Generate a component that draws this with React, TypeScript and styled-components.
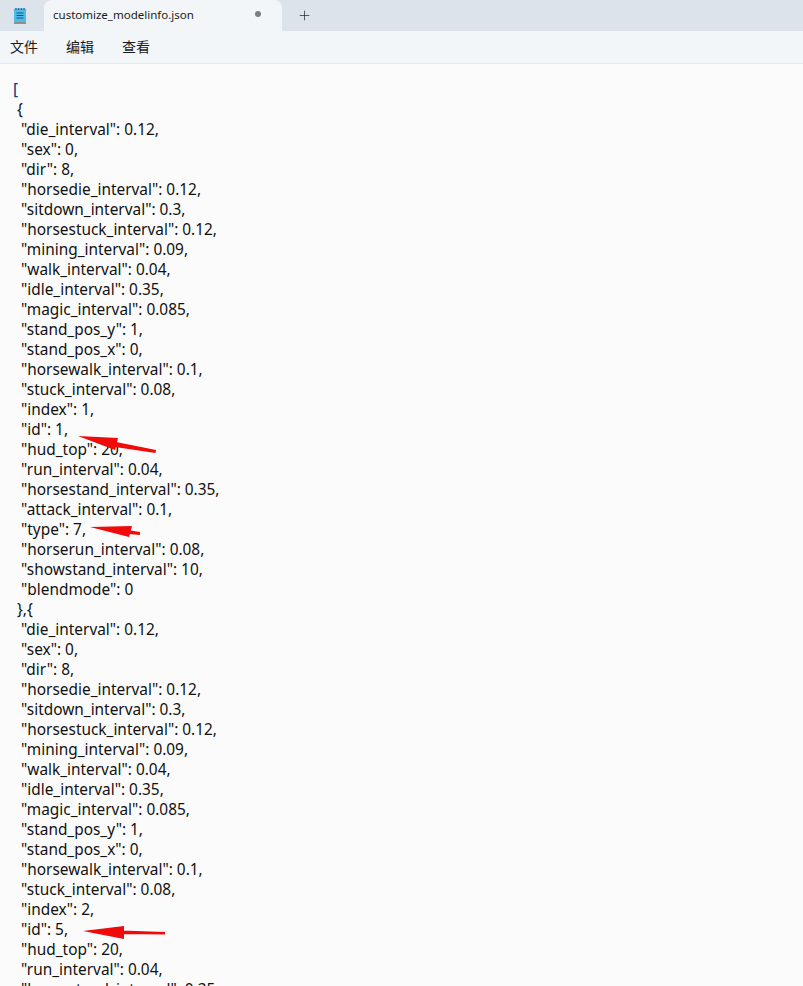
import styled, { createGlobalStyle } from "styled-components";
import { Plus } from "lucide-react";

const GlobalStyle = createGlobalStyle`
  html, body {
    margin: 0;
    padding: 0;
    height: 100%;
    overflow: hidden;
    background: #fbfbfb;
  }
`;

const Window = styled.div`
  position: relative;
  display: flex;
  flex-direction: column;
  height: 986px;
  overflow: hidden;
  background: #fbfbfb;
  color: #1a1a1a;
  font-family: "Noto Sans", "Noto Sans CJK SC", sans-serif;
`;

const TabBar = styled.div`
  display: flex;
  align-items: flex-end;
  height: 31px;
  background: #dde3ea;
  flex-shrink: 0;
`;

const AppIcon = styled.div`
  display: flex;
  align-items: center;
  justify-content: center;
  width: 44px;
  height: 31px;
  padding-right: 5px;
  box-sizing: border-box;
`;

const Tab = styled.div`
  display: flex;
  align-items: center;
  width: 238px;
  height: 31px;
  padding: 0 14px 0 9px;
  box-sizing: border-box;
  background: #f3f6f9;
  border-radius: 8px 8px 0 0;
  font-size: 11.5px;
`;

const TabTitle = styled.span`
  flex: 1;
  padding-bottom: 2px;
`;

const UnsavedDot = styled.span`
  width: 6px;
  height: 6px;
  margin: 0 7px 3px 0;
  border-radius: 50%;
  background: #7b7f84;
`;

const NewTab = styled.div`
  display: flex;
  align-items: center;
  justify-content: center;
  width: 44px;
  height: 31px;
  color: #333;
`;

const MenuBar = styled.div`
  display: flex;
  gap: 28px;
  align-items: center;
  height: 33px;
  padding: 0 10px 2px;
  box-sizing: border-box;
  background: #f3f6f9;
  border-bottom: 1px solid #e5e7ea;
  font-size: 14px;
  flex-shrink: 0;
`;

const Editor = styled.pre`
  margin: 0;
  padding: 16px 0 0 13px;
  font-family: "Noto Sans", "Noto Sans CJK SC", sans-serif;
  font-size: 15.4px;
  line-height: 20px;
  color: #111;
  white-space: pre;
`;

const Bracket = styled.span`
  color: #0f3f80;
  font-weight: 500;
`;

const Annotations = styled.svg`
  position: absolute;
  inset: 0;
  width: 803px;
  height: 986px;
  pointer-events: none;
`;

const NotepadIcon = () => (
  <svg width="14" height="18" viewBox="0 0 14 18">
    <rect x="1" y="1.500" width="12" height="15" rx="1" fill="#4dbce8" />
    <rect x="1" y="15.500" width="12" height="1.200" fill="#c8662a" />
    <path d="M3 1v2M5.700 1v2M8.300 1v2M11 1v2" stroke="#1d4f78" strokeWidth="1" />
    <path d="M3.500 6h7M3.500 8.500h7M3.500 11h7" stroke="#14587f" strokeWidth="1" />
  </svg>
);

const record = (index: number, id: number, type: number) => `  "die_interval": 0.12,
  "sex": 0,
  "dir": 8,
  "horsedie_interval": 0.12,
  "sitdown_interval": 0.3,
  "horsestuck_interval": 0.12,
  "mining_interval": 0.09,
  "walk_interval": 0.04,
  "idle_interval": 0.35,
  "magic_interval": 0.085,
  "stand_pos_y": 1,
  "stand_pos_x": 0,
  "horsewalk_interval": 0.1,
  "stuck_interval": 0.08,
  "index": ${index},
  "id": ${id},
  "hud_top": 20,
  "run_interval": 0.04,
  "horsestand_interval": 0.35,
  "attack_interval": 0.1,
  "type": ${type},
  "horserun_interval": 0.08,
  "showstand_interval": 10,
  "blendmode": 0`;

const body = `
 {
${record(1, 1, 7)}
 },{
${record(2, 5, 7)}`;

export default function App() {
  return (
    <>
      <GlobalStyle />
      <Window>
        <TabBar>
          <AppIcon>
            <NotepadIcon />
          </AppIcon>
          <Tab>
            <TabTitle>customize_modelinfo.json</TabTitle>
            <UnsavedDot />
          </Tab>
          <NewTab>
            <Plus size={15} strokeWidth={1.25} />
          </NewTab>
        </TabBar>
        <MenuBar>
          <span>文件</span>
          <span>编辑</span>
          <span>查看</span>
        </MenuBar>
        <Editor>
          <Bracket>[</Bracket>
          {body}
        </Editor>
        <Annotations viewBox="0 0 803 986">
          <path d="M78 436 L118 438 L115 450 Z M116 442 L156 450 L155.500 453 L115 447 Z" fill="#f00a0a" />
          <path d="M90 527 L132 526 L129 537 Z M128 530 L140 532 L140 535 L128 534 Z" fill="#f00a0a" />
          <path d="M83 931 L124 926 L124 939 Z M122 930.500 L165 932 L165 934.500 L122 934 Z" fill="#f00a0a" />
        </Annotations>
      </Window>
    </>
  );
}
